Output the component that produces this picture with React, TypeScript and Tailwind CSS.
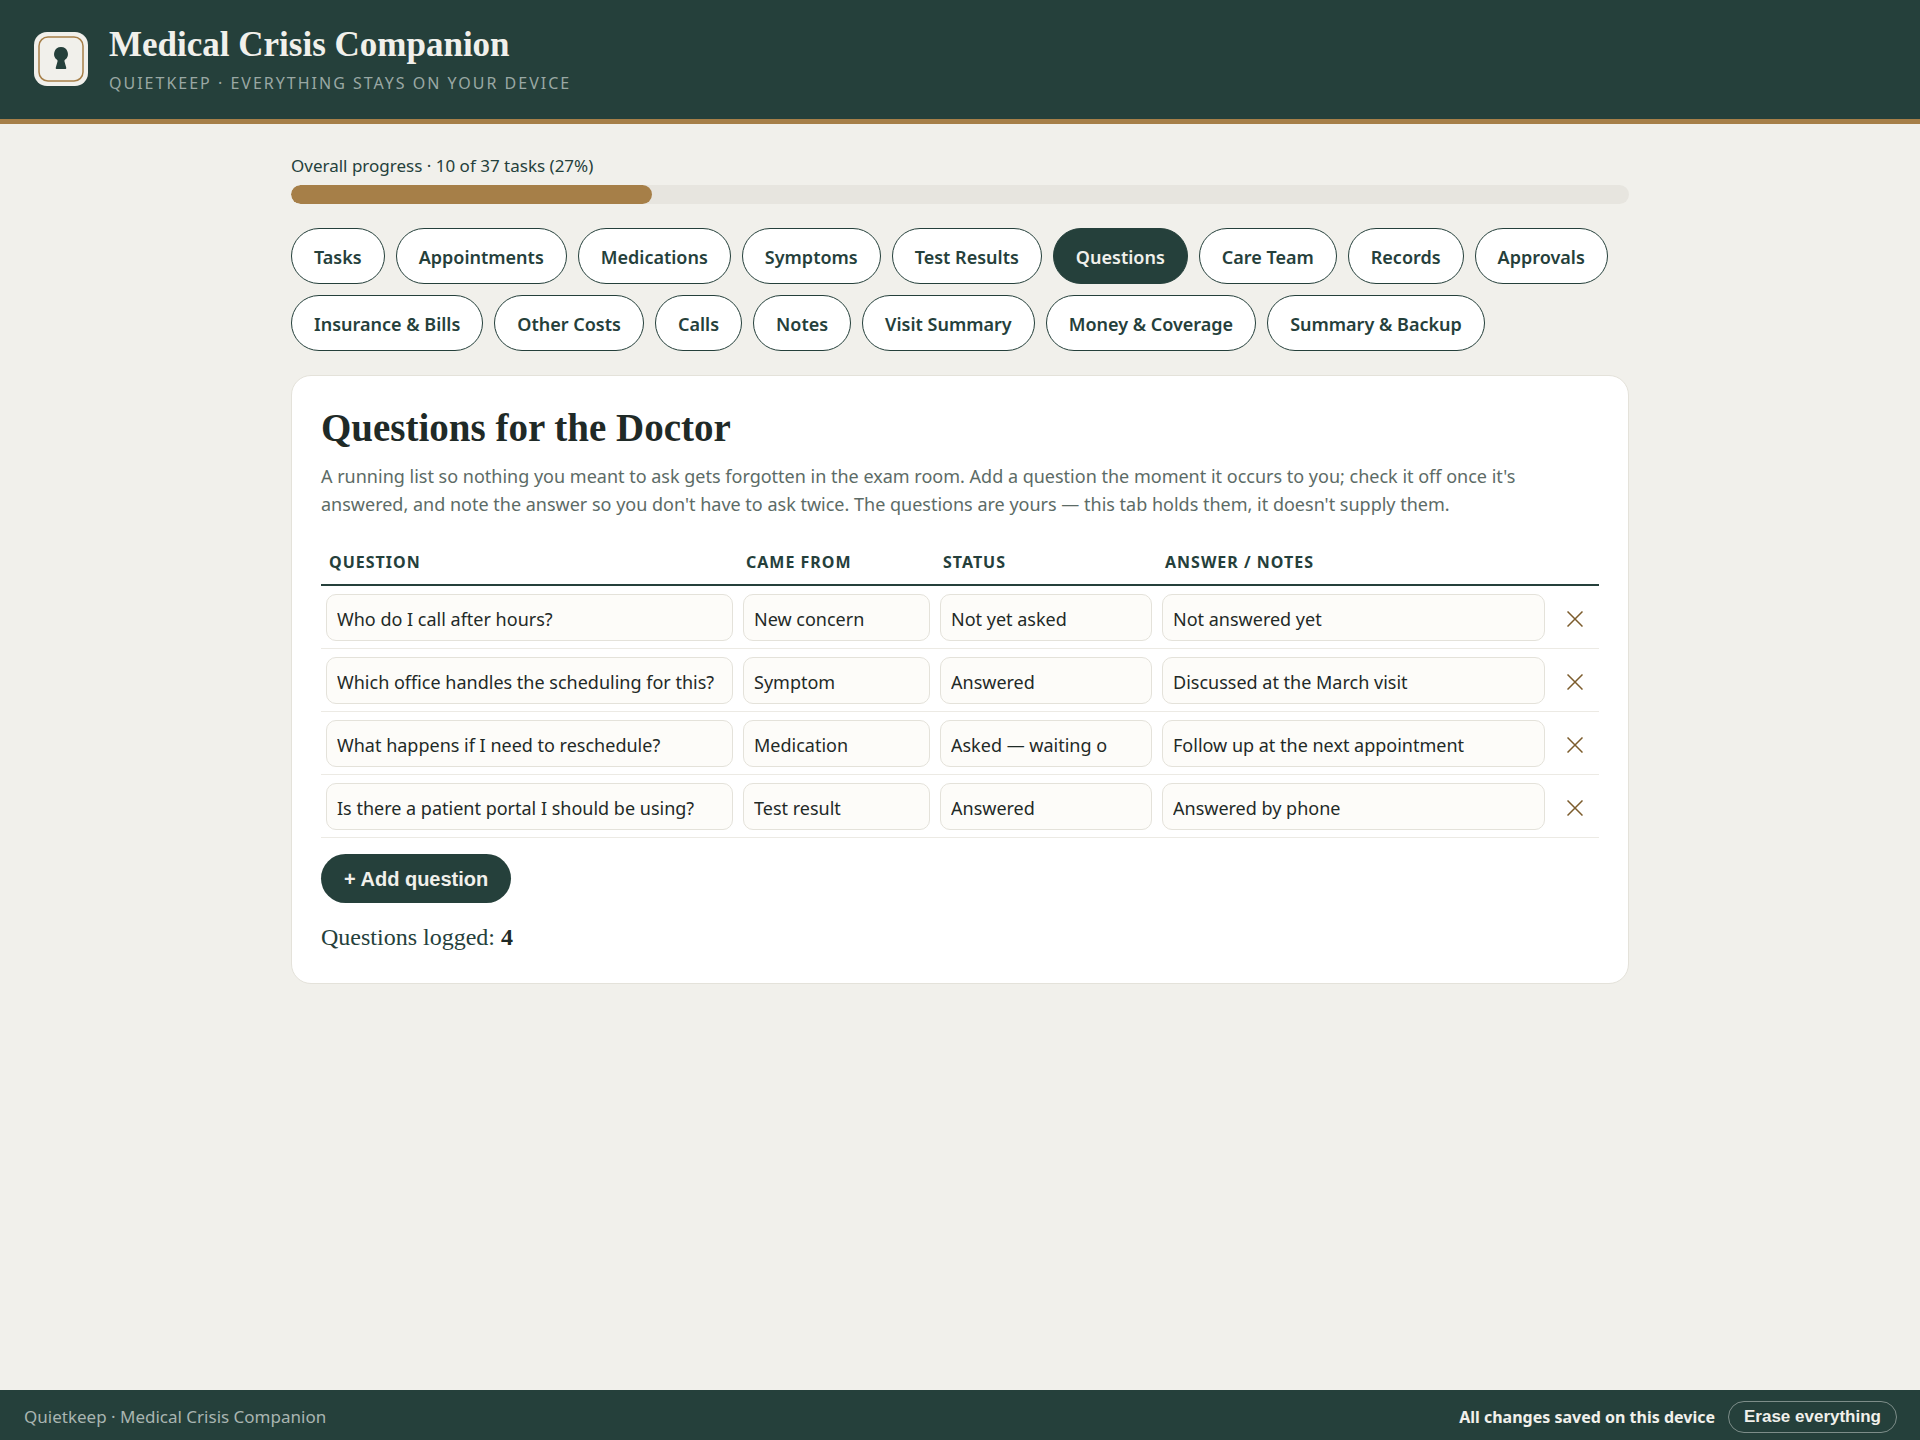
import React, { useState } from "react";

interface Question {
  id: number;
  text: string;
  source: string;
  status: string;
  notes: string;
}

const TABS = [
  "Tasks",
  "Appointments",
  "Medications",
  "Symptoms",
  "Test Results",
  "Questions",
  "Care Team",
  "Records",
  "Approvals",
  "Insurance & Bills",
  "Other Costs",
  "Calls",
  "Notes",
  "Visit Summary",
  "Money & Coverage",
  "Summary & Backup",
];

const SOURCES = ["New concern", "Symptom", "Medication", "Test result"];
const STATUSES = ["Not yet asked", "Asked — waiting on answer", "Answered"];

const INITIAL_QUESTIONS: Question[] = [
  {
    id: 1,
    text: "Who do I call after hours?",
    source: "New concern",
    status: "Not yet asked",
    notes: "Not answered yet",
  },
  {
    id: 2,
    text: "Which office handles the scheduling for this?",
    source: "Symptom",
    status: "Answered",
    notes: "Discussed at the March visit",
  },
  {
    id: 3,
    text: "What happens if I need to reschedule?",
    source: "Medication",
    status: "Asked — waiting on answer",
    notes: "Follow up at the next appointment",
  },
  {
    id: 4,
    text: "Is there a patient portal I should be using?",
    source: "Test result",
    status: "Answered",
    notes: "Answered by phone",
  },
];

const DONE = 10;
const TOTAL = 37;

const fieldClass =
  "block w-full h-[47px] rounded-[10px] border border-[#e4e2da] bg-[#fdfcf9] px-[10px] pt-0.5 text-lg text-[#1f2a27]";
const headClass =
  "px-2 pb-[10px] text-left text-base leading-6 font-bold tracking-[1px] uppercase text-[#25403b]";
const cellClass = "px-[5px] pt-2 pb-[7px]";

const Logo = () => (
  <svg className="w-[54px] h-[54px] shrink-0" viewBox="0 0 54 54" aria-hidden="true">
    <rect width="54" height="54" rx="13" fill="#f1f0eb" />
    <rect x="5" y="5" width="44" height="44" rx="9" fill="none" stroke="#a67f48" strokeWidth="1.5" />
    <path
      d="M27 15a7 7 0 0 0-4 12.700c.6.500.7 1 .5 1.700L21.800 35.500c-.3 1 .3 1.500 1.200 1.500h8c.9 0 1.500-.5 1.200-1.500L30.500 29.400c-.2-.7-.1-1.200.5-1.700A7 7 0 0 0 27 15z"
      fill="#25403b"
    />
  </svg>
);

export default function App() {
  const [activeTab, setActiveTab] = useState("Questions");
  const [questions, setQuestions] = useState<Question[]>(INITIAL_QUESTIONS);
  const percent = Math.round((DONE / TOTAL) * 100);

  const update = (id: number, patch: Partial<Question>) =>
    setQuestions(questions.map((q) => (q.id === id ? { ...q, ...patch } : q)));

  const addQuestion = () =>
    setQuestions([
      ...questions,
      { id: Date.now(), text: "", source: SOURCES[0], status: STATUSES[0], notes: "" },
    ]);

  return (
    <div className="min-h-screen flex flex-col bg-[#f1f0eb] font-['Noto_Sans','Open_Sans',sans-serif] text-[#1f2a27]">
      <header className="flex items-center gap-[21px] h-[124px] px-[34px] pb-0.5 border-b-[5px] border-[#a67f48] bg-[#25403b]">
        <Logo />
        <div className="pt-0.5">
          <h1 className="font-['Liberation_Serif',serif] text-[35px] leading-10 font-bold text-[#f1f0eb]">
            Medical Crisis Companion
          </h1>
          <p className="mt-1.5 text-base leading-6 tracking-[2px] uppercase text-[#9aa8a4]">
            Quietkeep · Everything stays on your device
          </p>
        </div>
      </header>

      <main className="flex-1 w-full max-w-[1338px] mx-auto pt-7">
        {/* Overall progress */}
        <p id="progress-label" className="text-[17px] leading-7 text-[#25403b]">
          Overall progress · {DONE} of {TOTAL} tasks ({percent}%)
        </p>
        <div
          role="progressbar"
          aria-labelledby="progress-label"
          aria-valuenow={percent}
          className="mt-[5px] h-[19px] rounded-full bg-[#e7e5df] overflow-hidden"
        >
          <div className="h-full rounded-full bg-[#a67f48]" style={{ width: `${percent}%` }} />
        </div>

        {/* Tabs */}
        <nav className="mt-6 flex flex-wrap gap-[11px]">
          {TABS.map((tab) => (
            <button
              key={tab}
              onClick={() => setActiveTab(tab)}
              className={`h-14 px-[22px] pt-0.5 rounded-full border border-[#25403b] text-lg font-semibold ${
                tab === activeTab ? "bg-[#25403b] text-[#f1f0eb]" : "bg-white text-[#25403b]"
              }`}
            >
              {tab}
            </button>
          ))}
        </nav>

        {/* Questions */}
        <section className="mt-6 mb-10 px-[29px] pt-8 pb-7 rounded-[20px] border border-[#e4e2da] bg-white">
          <h2 className="font-['Liberation_Serif',serif] text-[39px] leading-10 font-bold">
            Questions for the Doctor
          </h2>
          <p className="mt-[14px] pr-8 text-lg leading-7 text-[#5c6b66]">
            A running list so nothing you meant to ask gets forgotten in the exam room. Add a
            question the moment it occurs to you; check it off once it's answered, and note the
            answer so you don't have to ask twice. The questions are yours — this tab holds them,
            it doesn't supply them.
          </p>

          <table className="mt-8 w-full table-fixed border-collapse">
            <thead>
              <tr className="border-b-2 border-[#25403b]">
                <th className={headClass}>Question</th>
                <th className={`${headClass} w-[197px]`}>Came from</th>
                <th className={`${headClass} w-[222px]`}>Status</th>
                <th className={`${headClass} w-[393px]`}>Answer / Notes</th>
                <th className="w-[49px]" aria-label="Remove" />
              </tr>
            </thead>
            <tbody>
              {questions.map((q) => (
                <tr key={q.id} className="border-b border-[#eceae4]">
                  <td className={cellClass}>
                    <input
                      type="text"
                      aria-label="Question"
                      className={fieldClass}
                      value={q.text}
                      onChange={(e) => update(q.id, { text: e.target.value })}
                    />
                  </td>
                  <td className={cellClass}>
                    <select
                      aria-label="Came from"
                      className={`${fieldClass} appearance-none`}
                      value={q.source}
                      onChange={(e) => update(q.id, { source: e.target.value })}
                    >
                      {SOURCES.map((s) => (
                        <option key={s}>{s}</option>
                      ))}
                    </select>
                  </td>
                  <td className={cellClass}>
                    <select
                      aria-label="Status"
                      className={`${fieldClass} appearance-none pr-[44px]`}
                      value={q.status}
                      onChange={(e) => update(q.id, { status: e.target.value })}
                    >
                      {STATUSES.map((s) => (
                        <option key={s}>{s}</option>
                      ))}
                    </select>
                  </td>
                  <td className={cellClass}>
                    <input
                      type="text"
                      aria-label="Answer or notes"
                      className={fieldClass}
                      value={q.notes}
                      onChange={(e) => update(q.id, { notes: e.target.value })}
                    />
                  </td>
                  <td className="pt-1 text-center">
                    <button
                      aria-label="Remove question"
                      className="p-2 align-middle text-[#7c5c2c]"
                      onClick={() => setQuestions(questions.filter((x) => x.id !== q.id))}
                    >
                      <svg className="w-4 h-4" viewBox="0 0 16 16" aria-hidden="true">
                        <path
                          d="M.5.500l15 15M15.500.500l-15 15"
                          stroke="currentColor"
                          strokeWidth="1.5"
                          fill="none"
                        />
                      </svg>
                    </button>
                  </td>
                </tr>
              ))}
            </tbody>
          </table>

          <button
            onClick={addQuestion}
            className="mt-4 h-[49px] px-[23px] rounded-full bg-[#25403b] font-['Liberation_Sans',sans-serif] text-xl font-bold text-[#f1f0eb]"
          >
            + Add question
          </button>
          <p className="mt-4 font-['Liberation_Serif',serif] text-2xl leading-9 text-[#25403b]">
            Questions logged: <strong className="text-[#1f2a27]">{questions.length}</strong>
          </p>
        </section>
      </main>

      <footer className="sticky bottom-0 flex items-center justify-between h-[50px] pl-6 pr-[23px] pt-[3px] bg-[#25403b]">
        <span className="text-[17px] text-[#a9b5b1]">Quietkeep · Medical Crisis Companion</span>
        <div className="flex items-center gap-[13px]">
          <span className="text-base font-bold text-[#f1f0eb]">
            All changes saved on this device
          </span>
          <button className="h-8 px-[15px] rounded-full border border-[#7d8d89] font-['Liberation_Sans',sans-serif] text-[17px] font-bold text-[#f1f0eb]">
            Erase everything
          </button>
        </div>
      </footer>
    </div>
  );
}
